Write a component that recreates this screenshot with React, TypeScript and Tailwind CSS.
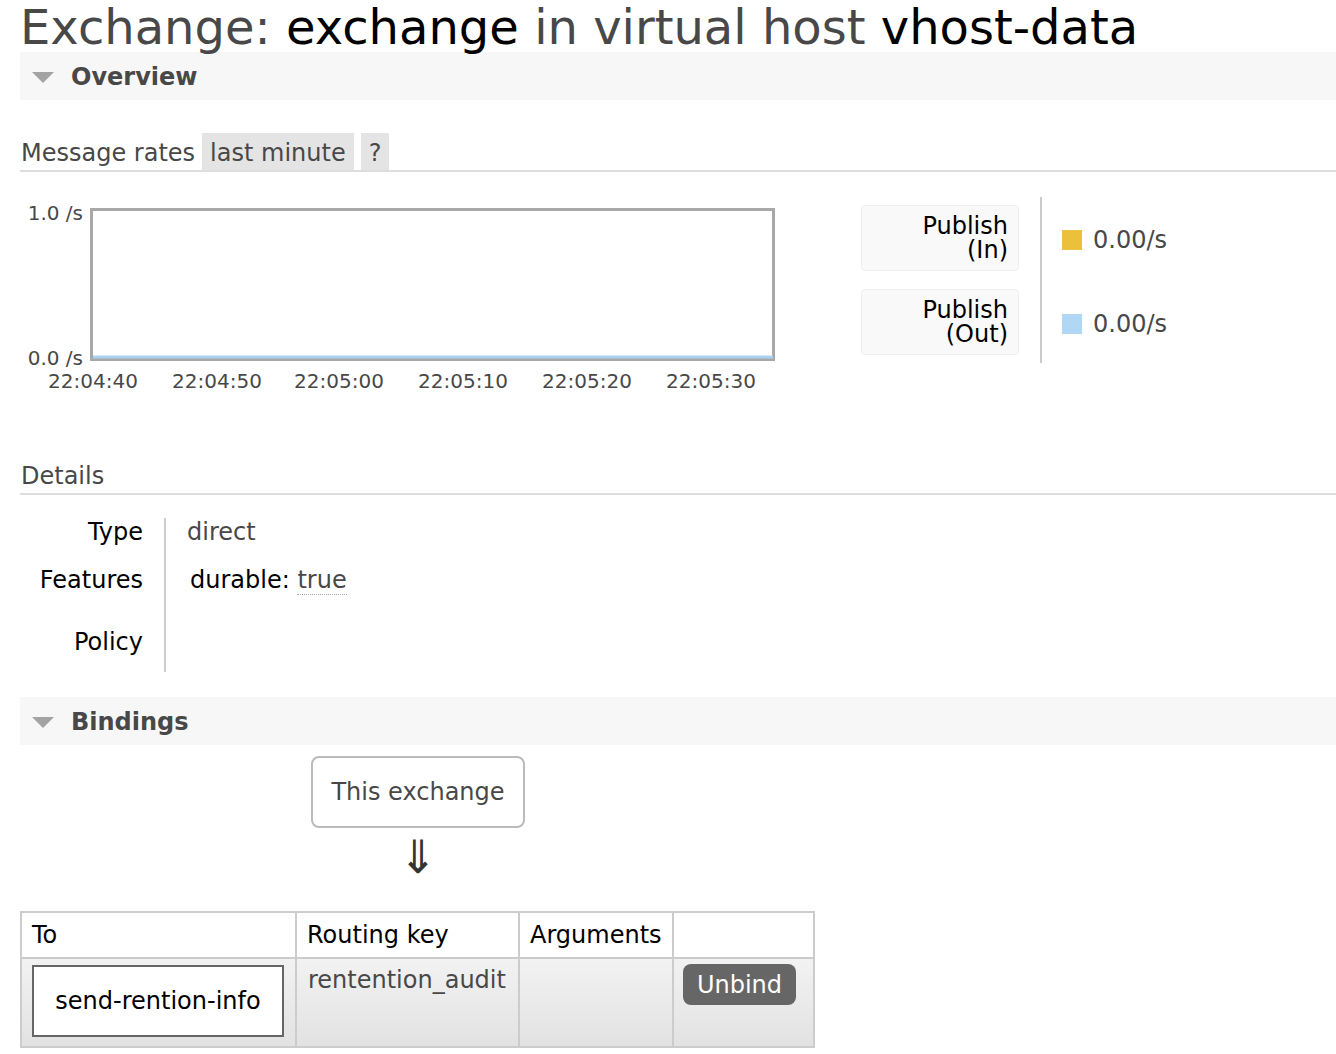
const font = "font-['DejaVu_Sans',Verdana,sans-serif]"

const ticks: [string, number][] = [
  ['22:04:40', 73],
  ['22:04:50', 197],
  ['22:05:00', 319],
  ['22:05:10', 443],
  ['22:05:20', 567],
  ['22:05:30', 691]
]

const Triangle = () => (
  <svg width="22" height="11" viewBox="0 0 22 11" className="block shrink-0">
    <path d="M0 0H22L11 11Z" fill="#a3a3a3" />
  </svg>
)

const SectionBar = ({ title }: { title: string }) => (
  <div className="flex h-[48px] items-center bg-[#f7f7f7] pl-[12px] pt-[2px]">
    <Triangle />
    <span className="ml-[17px] text-[24px] font-bold leading-[28px] text-[#484848]">
      {title}
    </span>
  </div>
)

const SubHeading = ({ children }: { children: React.ReactNode }) => (
  <div className="flex h-[39px] items-start gap-[7px] border-b-2 border-[#dddddd] text-[24px] leading-[28px] text-[#484848]">
    {children}
  </div>
)

const RateChart = () => (
  <svg width="760" height="200" className="block shrink-0">
    <rect x="71.5" y="12.5" width="682" height="150" fill="#ffffff" stroke="#a8a8a8" strokeWidth="3" />
    <rect x="73" y="158.5" width="680" height="3" fill="#aad2f2" />
    <text x="63" y="23" textAnchor="end" fontSize="20" fill="#484848">1.0 /s</text>
    <text x="63" y="168" textAnchor="end" fontSize="20" fill="#484848">0.0 /s</text>
    {ticks.map(([label, x]) => (
      <text key={label} x={x} y="191" textAnchor="middle" fontSize="20" fill="#484848">
        {label}
      </text>
    ))}
  </svg>
)

const LegendBox = ({ top, bottom }: { top: string; bottom: string }) => (
  <div className="flex h-[66px] w-[158px] items-center justify-end rounded-[4px] border border-[#eeeeee] bg-[#f9f9f9] pr-[10px] text-[24px] leading-[24px] text-black">
    <span className="text-right">
      {top}
      <br />
      {bottom}
    </span>
  </div>
)

const LegendValue = ({ color }: { color: string }) => (
  <div className="flex h-[66px] items-center gap-[11px] pt-[3px] text-[24px] leading-[28px] text-[#484848]">
    <span className={`block h-[20px] w-[20px] ${color}`} />
    <span>0.00/s</span>
  </div>
)

const Legend = () => (
  <div className="ml-[81px] flex">
    <div className="flex flex-col gap-[18px] py-[8px]">
      <LegendBox top="Publish" bottom="(In)" />
      <LegendBox top="Publish" bottom="(Out)" />
    </div>
    <div className="ml-[21px] flex flex-col gap-[18px] border-l-2 border-[#cccccc] py-[8px] pl-[20px]">
      <LegendValue color="bg-[#ebc13c]" />
      <LegendValue color="bg-[#b0d8f5]" />
    </div>
  </div>
)

const Details = () => (
  <div className="mt-[23px] grid grid-cols-[144px_auto] text-[24px] leading-[28px]">
    <div className="h-[48px] pr-[21px] text-right text-black">Type</div>
    <div className="h-[48px] border-l-2 border-[#cccccc] pl-[21px] text-[#484848]">direct</div>
    <div className="h-[62px] pr-[21px] text-right text-black">Features</div>
    <div className="h-[62px] border-l-2 border-[#cccccc] pl-[24px] text-black">
      durable:{' '}
      <span className="border-b border-dotted border-[#aaaaaa] text-[#484848]">true</span>
    </div>
    <div className="h-[44px] pr-[21px] text-right text-black">Policy</div>
    <div className="h-[44px] border-l-2 border-[#cccccc]" />
  </div>
)

const headCell = 'flex h-[44px] items-center bg-white px-[10px] text-black'
const bodyCell = 'h-[87px] bg-linear-to-b from-[#f2f2f2] to-[#e2e2e2]'

const BindingsTable = () => (
  <div className="grid w-[795px] grid-cols-[273px_221px_152px_139px] gap-[2px] bg-[#cccccc] p-[2px] text-[24px] leading-[28px]">
    <div className={headCell}>To</div>
    <div className={headCell}>Routing key</div>
    <div className={headCell}>Arguments</div>
    <div className={headCell} />
    <div className={`${bodyCell} pl-[10px] pt-[6px]`}>
      <div className="flex h-[72px] w-[252px] items-center justify-center border-2 border-[#666666] bg-white text-black">
        send-rention-info
      </div>
    </div>
    <div className={`${bodyCell} pl-[11px] pt-[7px] text-[#484848]`}>rentention_audit</div>
    <div className={bodyCell} />
    <div className={`${bodyCell} pl-[9px] pt-[5px]`}>
      <button className="flex h-[41px] w-[113px] items-center justify-center rounded-[8px] bg-[#666666] text-white">
        Unbind
      </button>
    </div>
  </div>
)

export default function App() {
  return (
    <div className={`${font} min-h-screen bg-white pl-[20px] text-[#484848]`}>
      <h1 className="h-[52px] whitespace-nowrap pt-[3px] text-[48px] leading-[49px] font-normal text-[#484848]">
        Exchange: <span className="text-black">exchange</span> in virtual host{' '}
        <span className="text-black">vhost-data</span>
      </h1>

      <SectionBar title="Overview" />

      <div className="mt-[33px]">
        <SubHeading>
          <span className="pl-px pt-[6px]">Message rates</span>
          <span className="h-[37px] bg-[#e4e4e4] px-[8px] pt-[6px]">last minute</span>
          <span className="h-[37px] bg-[#e4e4e4] px-[8px] pt-[6px]">?</span>
        </SubHeading>
        <div className="mt-[25px] flex items-start">
          <RateChart />
          <Legend />
        </div>
      </div>

      <div className="mt-[59px]">
        <SubHeading>
          <span className="pl-px pt-[6px]">Details</span>
        </SubHeading>
        <Details />
      </div>

      <div className="mt-[25px]">
        <SectionBar title="Bindings" />
        <div className="ml-[291px] mt-[11px] flex w-[214px] flex-col items-center">
          <div className="flex h-[72px] w-[214px] items-center justify-center rounded-[8px] border-2 border-[#bbbbbb] text-[24px] leading-[28px] text-[#484848]">
            This exchange
          </div>
          <div className="mt-[4px] h-[79px] text-[46px] leading-[50px] text-[#333333]">⇓</div>
        </div>
        <BindingsTable />
      </div>
    </div>
  )
}
